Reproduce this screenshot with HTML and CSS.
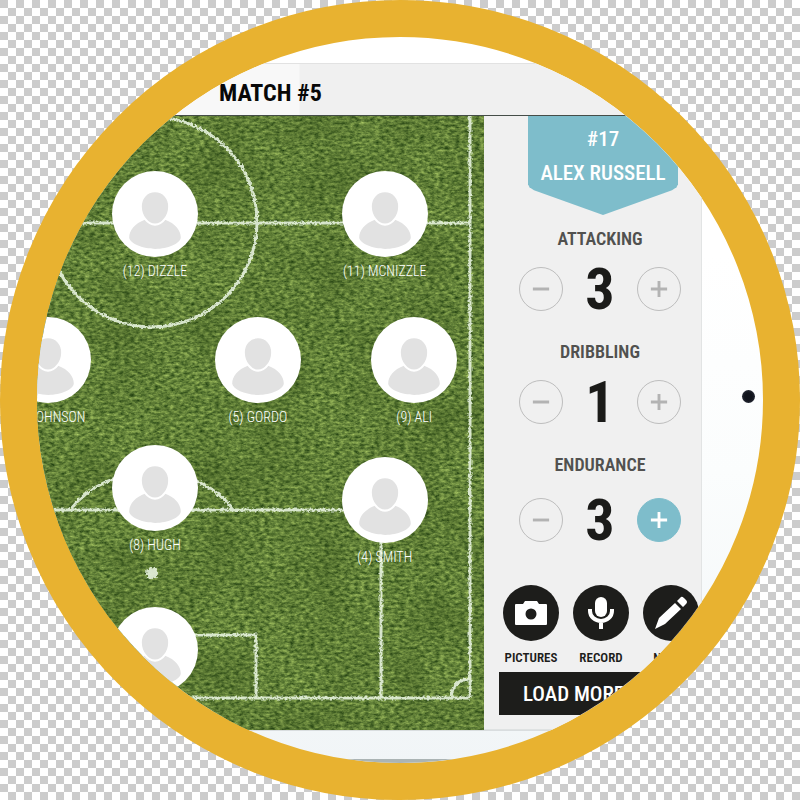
FILE: index.html
```
<!DOCTYPE html>
<html lang="en">
<head>
<meta charset="utf-8">
<title>Match #5</title>
<link rel="stylesheet" href="styles.css">
</head>
<body>
<svg class="defs" aria-hidden="true">
  <defs>
    <symbol id="person" viewBox="0 0 85 85">
      <path d="M33 48C22 52 17 59 17 66C18 72 31 77 43 77S67 72 68 66C68 59 63 52 52 48Q47 53 42.500 53T33 48Z"/>
      <path class="head" d="M42.500 20C51 20 56.500 27 56.500 35C56.500 44 50 53 42.500 53S28.500 44 28.500 35C28.500 27 34 20 42.500 20Z"/>
    </symbol>
    <symbol id="minus" viewBox="0 0 44 44"><path d="M13.500 22H30.500"/></symbol>
    <symbol id="plus" viewBox="0 0 44 44"><path d="M13.500 22H30.500M22 13.500V30.500"/></symbol>
  </defs>
</svg>
<main class="lens">
  <header class="topbar"><h1>MATCH #5</h1></header>
  <section class="pitch" aria-label="Line-up">
    <svg class="field" viewBox="37 116 447 614" preserveAspectRatio="none" aria-hidden="true">
      <defs>
        <filter id="grass" x="0" y="0" width="100%" height="100%" color-interpolation-filters="sRGB">
          <feTurbulence type="fractalNoise" baseFrequency="0.2 0.36" numOctaves="4" seed="8" result="blades"/>
          <feColorMatrix in="blades" values="0.62 0.1 0 0 0.03  0.62 0.1 0 0 0.15  0.38 0.05 0 0 0.01  0 0 0 0 1" result="fine"/>
          <feTurbulence type="fractalNoise" baseFrequency="0.02" numOctaves="2" seed="3"/>
          <feColorMatrix values="0 0 0 0 0.18  0 0 0 0 0.28  0 0 0 0 0.08  0.6 0 0 0 -0.22" result="patch"/>
          <feMerge><feMergeNode in="fine"/><feMergeNode in="patch"/></feMerge>
        </filter>
        <filter id="chalk" filterUnits="userSpaceOnUse" x="37" y="116" width="447" height="614">
          <feTurbulence type="fractalNoise" baseFrequency="0.4" numOctaves="2"/>
          <feDisplacementMap in="SourceGraphic" xChannelSelector="R" yChannelSelector="G" scale="4"/>
        </filter>
      </defs>
      <rect x="37" y="116" width="447" height="614" filter="url(#grass)"/>
      <g class="chalk" filter="url(#chalk)">
        <circle cx="152" cy="222" r="105"/>
        <path d="M37 223H470M470 116V698M37 698H470M37 510H381V698M70 510Q98 474 152 472Q206 474 234 510M37 635H256V698M451 698Q452 680 470 679"/>
        <circle class="spot" cx="152" cy="573" r="6"/>
      </g>
    </svg>
    <figure class="player p12"><svg><use href="#person"/></svg><figcaption>(12) DIZZLE</figcaption></figure>
    <figure class="player p11"><svg><use href="#person"/></svg><figcaption>(11) MCNIZZLE</figcaption></figure>
    <figure class="player p7"><svg><use href="#person"/></svg><figcaption>(7) JOHNSON</figcaption></figure>
    <figure class="player p5"><svg><use href="#person"/></svg><figcaption>(5) GORDO</figcaption></figure>
    <figure class="player p9"><svg><use href="#person"/></svg><figcaption>(9) ALI</figcaption></figure>
    <figure class="player p8"><svg><use href="#person"/></svg><figcaption>(8) HUGH</figcaption></figure>
    <figure class="player p4"><svg><use href="#person"/></svg><figcaption>(4) SMITH</figcaption></figure>
    <figure class="player p1"><svg><use href="#person"/></svg></figure>
  </section>
  <aside class="panel">
    <h2 class="badge"><span>#17</span><span>ALEX RUSSELL</span></h2>
    <section class="stat">
      <h3>ATTACKING</h3>
      <div class="stepper">
        <button aria-label="Decrease attacking"><svg><use href="#minus"/></svg></button>
        <output>3</output>
        <button aria-label="Increase attacking"><svg><use href="#plus"/></svg></button>
      </div>
    </section>
    <section class="stat">
      <h3>DRIBBLING</h3>
      <div class="stepper">
        <button aria-label="Decrease dribbling"><svg><use href="#minus"/></svg></button>
        <output>1</output>
        <button aria-label="Increase dribbling"><svg><use href="#plus"/></svg></button>
      </div>
    </section>
    <section class="stat">
      <h3>ENDURANCE</h3>
      <div class="stepper">
        <button aria-label="Decrease endurance"><svg><use href="#minus"/></svg></button>
        <output>3</output>
        <button class="active" aria-label="Increase endurance"><svg><use href="#plus"/></svg></button>
      </div>
    </section>
    <nav class="tools">
      <button>
        <svg viewBox="0 0 56 56"><path fill-rule="evenodd" d="M12 20Q12 19 13 19H20L22 16H34L36 19H43Q44 19 44 20V39Q44 40 43 40H13Q12 40 12 39ZM28 23.500A5.500 5.500 0 1 0 28 34.500A5.500 5.500 0 1 0 28 23.500Z"/></svg>
        PICTURES
      </button>
      <button>
        <svg viewBox="0 0 56 56"><rect x="22" y="12" width="12" height="20" rx="6"/><path class="stroke" d="M17 24V26A11 10 0 0 0 39 26V24M28 36V44"/></svg>
        RECORD
      </button>
      <button>
        <svg viewBox="0 0 56 56"><path d="M12 44L16 33L32 18L38 24L22 39ZM34 16L38 12Q39 11 41 13L43 15Q45 17 43 19L40 22Z"/></svg>
        NOTES
      </button>
    </nav>
    <button class="load">LOAD MORE</button>
  </aside>
  <div class="bezel"><span class="camera"></span></div>
  <div class="edge"></div>
</main>
</body>
</html>
```
FILE: styles.css
```
* { box-sizing: border-box; }
body {
  margin: 0;
  min-height: 100vh;
  background: repeating-conic-gradient(#fff 0 25%, #ccc 0 50%) 0 0 / 16px 16px;
  font-family: "Roboto Condensed", "Liberation Sans Narrow", "Liberation Sans", sans-serif;
}
.defs { position: absolute; width: 0; height: 0; }
.lens {
  width: 100vmin;
  aspect-ratio: 1;
  margin: 0 auto;
  border: 37px solid #e8b230;
  border-radius: 50%;
  overflow: hidden;
  background: linear-gradient(#fff 30%, #fbfdfd 60%, #f1f5f7);
  padding-top: 26px;
  display: grid;
  grid-template-columns: 1fr 218px 61px;
  grid-template-rows: 53px minmax(0, 1fr) 33px;
}
.topbar {
  grid-column: 1 / 4;
  display: flex;
  align-items: center;
  padding: 6px 0 0 182px;
  border-top: 1px solid #e2e2e2;
  border-bottom: 1px solid #454d48;
  background: linear-gradient(90deg, #f8f8f8 262px, #f0f0f0 263px);
}
h1, h2, h3 { margin: 0; font-weight: 700; }
h1 { font-size: 24px; line-height: 32px; color: #080808; }
.pitch { position: relative; background: #557f38; }
.field { display: block; width: 100%; height: 100%; }
.chalk { fill: none; stroke: #eaf5e2; stroke-width: 3; opacity: .88; }
.chalk .spot { fill: #eaf5e2; stroke: none; }
.player {
  position: absolute;
  margin: 0;
  width: 120px;
  transform: translateX(-50%);
  display: flex;
  flex-direction: column;
  align-items: center;
  gap: 5px;
}
.player svg { width: 86px; height: 86px; border-radius: 50%; background: #fff; fill: #e2e2e2; }
.head { stroke: #fff; stroke-width: 2; }
.player figcaption { font-size: 14px; line-height: 18px; font-weight: 300; color: #fff; white-space: nowrap; }
.p12 { left: 26.4%; top: 9%; }
.p11 { left: 77.8%; top: 9%; }
.p7 { left: 2.5%; top: 32.8%; }
.p5 { left: 49.4%; top: 32.8%; }
.p9 { left: 84.4%; top: 32.8%; }
.p8 { left: 26.4%; top: 53.6%; }
.p4 { left: 77.8%; top: 55.5%; }
.p1 { left: 26.4%; top: 80%; }
.panel {
  background: #f0f0f0;
  border-right: 1px solid #e2e4e4;
  border-bottom: 1px solid #dfe2e2;
  padding: 0 0 14px 15px;
  display: flex;
  flex-direction: column;
}
.badge {
  width: 150px;
  height: 99px;
  flex: none;
  margin: 0 auto 12px 29px;
  padding-top: 6px;
  display: flex;
  flex-direction: column;
  align-items: center;
  clip-path: polygon(0 0, 100% 0, 100% 69%, 99% 72%, 96% 75%, 50% 100%, 4% 75%, 1% 72%, 0 69%);
  background: #7ebdcb;
  color: #fff;
  font-size: 21px;
  line-height: 34px;
  font-weight: 500;
}
.stat { height: 113px; flex: none; padding: 0 20px; }
.stat h3 { color: #51514f; font-size: 18px; line-height: 24px; text-align: center; font-weight: 600; }
.stepper { display: flex; justify-content: space-between; align-items: center; height: 76px; }
.stat:last-of-type .stepper { height: 86px; }
.stepper button {
  width: 44px;
  height: 44px;
  padding: 0;
  border: 1px solid #bdbdbd;
  border-radius: 50%;
  background: none;
}
.stepper svg { display: block; width: 42px; height: 42px; fill: none; stroke: #b3b3b3; stroke-width: 3; }
.stepper .active { background: #7ebdcb; border-color: #7ebdcb; }
.stepper .active svg { stroke: #fff; }
output { font-size: 58px; line-height: 76px; font-weight: 700; color: #1b1b19; }
.tools { display: flex; gap: 14px; margin: auto 0 4px 4px; }
.tools button {
  flex: none;
  width: 56px;
  padding: 0;
  border: 0;
  background: none;
  display: flex;
  flex-direction: column;
  align-items: center;
  gap: 7px;
  font: inherit;
  font-size: 13px;
  line-height: 20px;
  font-weight: 600;
  color: #1d1d1b;
}
.tools svg { width: 56px; height: 56px; border-radius: 50%; background: #1d1d1b; fill: #fff; }
.tools .stroke { fill: none; stroke: #fff; stroke-width: 4; }
.load {
  height: 43px;
  flex: none;
  padding: 0 0 0 24px;
  border: 0;
  background: #1d1d1b;
  color: #fff;
  font: inherit;
  font-size: 21px;
  font-weight: 500;
  text-align: left;
}
.bezel { display: flex; justify-content: flex-end; padding: 274px 8px 0 0; }
.camera { width: 13px; height: 13px; border-radius: 50%; background: radial-gradient(#10131b 40%, #343946); }
.edge { grid-column: 1 / 4; border-top: 1px solid #d9dddf; border-bottom: 4px solid #abb4b4; }
```
